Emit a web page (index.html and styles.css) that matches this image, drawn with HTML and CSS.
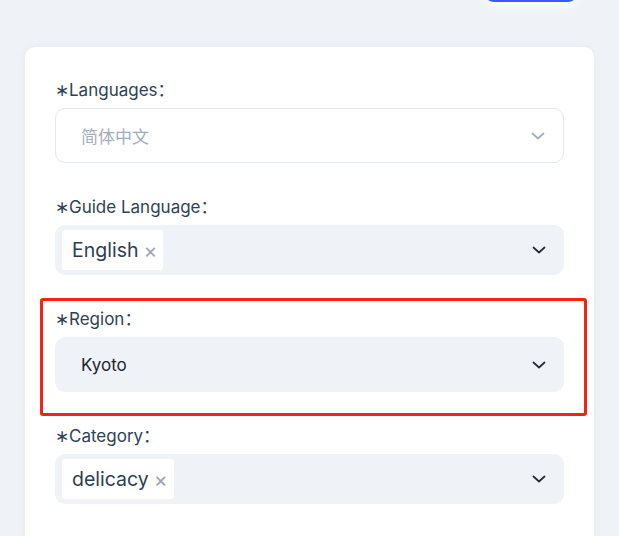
FILE: index.html
```html
<!DOCTYPE html>
<html>
<head>
<meta charset="utf-8">
<link rel="stylesheet" href="styles.css">
</head>
<body>
<div class="topbar"><div class="top-btn"></div></div>
<div class="card">
  <div class="item">
    <div class="label">∗Languages：</div>
    <div class="select single disabled">
      <span class="value placeholder">简体中文</span>
      <svg class="chev" width="16" height="16" viewBox="0 0 16 16"><path d="M2.5 5.5 L8 10.5 L13.5 5.5" fill="none" stroke="#a3adb9" stroke-width="1.7" stroke-linecap="round" stroke-linejoin="round"/></svg>
    </div>
  </div>
  <div class="item">
    <div class="label">∗Guide Language：</div>
    <div class="select multi">
      <span class="tag">English<span class="x">×</span></span>
      <svg class="chev" width="16" height="16" viewBox="0 0 16 16"><path d="M2.5 5.5 L8 10.5 L13.5 5.5" fill="none" stroke="#222a33" stroke-width="1.7" stroke-linecap="round" stroke-linejoin="round"/></svg>
    </div>
  </div>
  <div class="item highlight">
    <div class="label">∗Region：</div>
    <div class="select single">
      <span class="value">Kyoto</span>
      <svg class="chev" width="16" height="16" viewBox="0 0 16 16"><path d="M2.5 5.5 L8 10.5 L13.5 5.5" fill="none" stroke="#222a33" stroke-width="1.7" stroke-linecap="round" stroke-linejoin="round"/></svg>
    </div>
  </div>
  <div class="item">
    <div class="label">∗Category：</div>
    <div class="select multi">
      <span class="tag">delicacy<span class="x">×</span></span>
      <svg class="chev" width="16" height="16" viewBox="0 0 16 16"><path d="M2.5 5.5 L8 10.5 L13.5 5.5" fill="none" stroke="#222a33" stroke-width="1.7" stroke-linecap="round" stroke-linejoin="round"/></svg>
    </div>
  </div>
</div>
</body>
</html>
```
FILE: styles.css
```css
html, body {
  margin: 0;
  padding: 0;
  background: #eff3f7;
  font-family: Inter, "Noto Sans CJK SC", sans-serif;
  height: 100%;
  overflow: hidden;
}
.topbar {
  height: 47px;
  display: flex;
  justify-content: flex-end;
  padding-right: 41px;
}
.top-btn {
  width: 94px;
  height: 40px;
  margin-top: -38px;
  background: #3a5cf6;
  border-radius: 10px;
  box-shadow: 0 4px 12px rgba(255,255,255,0.8);
}
.card {
  margin-left: 25px;
  width: 509px;
  padding: 31px 30px 40px 30px;
  background: #fff;
  border-radius: 10px;
  box-shadow: 0 0 6px rgba(220,226,234,0.6);
  min-height: 600px;
}
.item {
  margin-bottom: 32px;
  position: relative;
}
.label {
  height: 24px;
  line-height: 24px;
  margin-bottom: 6px;
  font-size: 17px;
  color: #2f4256;
}
.select {
  box-sizing: border-box;
  display: flex;
  align-items: center;
  border-radius: 10px;
  background: #eff2f6;
  position: relative;
}
.select.single {
  height: 55px;
  padding-left: 26px;
}
.select.disabled {
  background: #fff;
  border: 1px solid #e3e8ee;
  padding-left: 25px;
}
.select.multi {
  height: 50px;
  padding-left: 7px;
}
.value {
  font-size: 17px;
  color: #1c2633;
}
.placeholder {
  color: #a3adb9;
}
.tag {
  background: #fff;
  height: 40px;
  border-radius: 3px;
  display: flex;
  align-items: center;
  padding: 0 6px 0 10px;
  font-size: 19.5px;
  color: #2c3e50;
}
.tag .x {
  font-size: 21px;
  color: #a0a6ad;
  margin-left: 5px;
}
.chev {
  position: absolute;
  right: 17px;
  top: 50%;
  margin-top: -8px;
}
.highlight::after {
  content: "";
  position: absolute;
  left: -15px;
  right: -23px;
  top: -9px;
  bottom: -24px;
  border: 3px solid #fa2016;
  border-radius: 3px;
}
```
